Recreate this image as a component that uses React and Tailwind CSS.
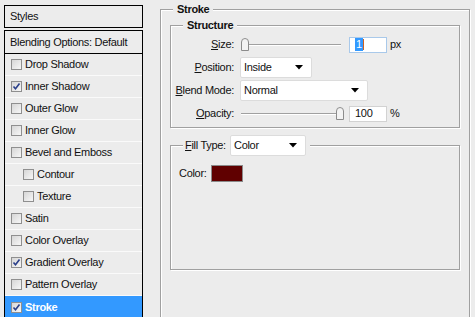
import React from "react";

const font = { fontFamily: '"Liberation Sans", Arial, sans-serif' };

function Check({ checked }) {
  return (
    <span className="w-[11px] h-[11px] shrink-0 border border-[#8f8f8f] bg-gradient-to-br from-[#d6d6d6] to-[#f7f7f7] flex items-center justify-center">
      {checked && (
        <svg width="9" height="9" viewBox="0 0 9 9">
          <path d="M1.5 4.5 L3.5 6.8 L7.5 1.5" fill="none" stroke="#2a3f8a" strokeWidth="1.6" />
        </svg>
      )}
    </span>
  );
}

function StyleRow({ label, checked, indent, active }) {
  return (
    <div
      className={
        "h-[22px] flex items-center gap-[3px] border-b border-[#fafafa] " +
        (indent ? "pl-[18px] " : "pl-[6px] ") +
        (active ? "bg-[#3399ff] text-white font-bold border-b-0" : "text-[#111]")
      }
    >
      <Check checked={checked} />
      <span>{label}</span>
    </div>
  );
}

function Arrow() {
  return (
    <svg width="8" height="5" viewBox="0 0 8 5" className="shrink-0">
      <path d="M0 0 H8 L4 4.5 Z" fill="#000" />
    </svg>
  );
}

function Select({ value, width }) {
  return (
    <div
      className="h-[21px] bg-white border border-[#dcdcdc] rounded-[2px] flex items-center justify-between pl-[3px] pr-[8px] text-[#111]"
      style={{ width }}
    >
      <span>{value}</span>
      <Arrow />
    </div>
  );
}

function Slider({ pos }) {
  return (
    <div className="relative w-[100px] h-[14px] flex items-center">
      <div className="w-full h-[2px] border-t border-[#a0a0a0] border-b border-b-white" />
      <svg
        width="8"
        height="13"
        viewBox="0 0 8 13"
        className="absolute top-0"
        style={{ left: pos }}
      >
        <path d="M0.5 12.5 V4 Q0.5 0.5 4 0.5 Q7.5 0.5 7.5 4 V12.5 Z" fill="#f3f3f3" stroke="#8c8c8c" />
      </svg>
    </div>
  );
}

function Key({ k, rest }) {
  return (
    <span>
      <span className="underline underline-offset-1">{k}</span>
      {rest}
    </span>
  );
}

export default function App() {
  const rows = [
    { label: "Drop Shadow" },
    { label: "Inner Shadow", checked: true },
    { label: "Outer Glow" },
    { label: "Inner Glow" },
    { label: "Bevel and Emboss" },
    { label: "Contour", indent: true },
    { label: "Texture", indent: true },
    { label: "Satin" },
    { label: "Color Overlay" },
    { label: "Gradient Overlay", checked: true },
    { label: "Pattern Overlay" },
    { label: "Stroke", checked: true, active: true },
  ];

  return (
    <div
      className="w-[475px] h-[317px] overflow-hidden bg-[#ececec] flex items-start pl-[4px] text-[11px] leading-[13px] tracking-[-0.3px]"
      style={font}
    >
      {/* styles list */}
      <div className="w-[139px] mt-[5px] flex flex-col">
        <div className="h-[23px] border border-black flex items-center pl-[5px] text-[#111]">Styles</div>
        <div className="mt-[2px] border border-black border-b-0">
          <div className="h-[23px] flex items-center pl-[5px] border-b border-black text-[#111]">
            Blending Options: Default
          </div>
          {rows.map((r) => (
            <StyleRow key={r.label} {...r} />
          ))}
        </div>
      </div>

      {/* stroke panel */}
      <fieldset className="ml-[17px] mt-[3px] w-[310px] h-[330px] border border-[#a0a0a0] shadow-[1px_1px_0_#fff,inset_1px_1px_0_#fff] px-[9px]">
        <legend className="ml-[3px] px-[4px] bg-[#ececec] font-bold text-[#111]">Stroke</legend>

        <fieldset className="mt-[3px] border border-[#a0a0a0] shadow-[1px_1px_0_#fff,inset_1px_1px_0_#fff] pt-[1px] pb-[2px]">
          <legend className="ml-[12px] px-[4px] bg-[#ececec] font-bold text-[#111]">Structure</legend>
          <div className="flex flex-col text-[#111]">
            <div className="h-[23px] flex items-center">
              <div className="w-[65px] text-right pr-[2px]">
                <Key k="S" rest="ize:" />
              </div>
              <div className="ml-[5px]">
                <Slider pos={0} />
              </div>
              <div className="ml-[8px] w-[38px] h-[16px] bg-white border border-[#a9c9ea] flex items-center pl-[5px]">
                <span className="bg-[#3399ff] text-white px-[1px]">1</span>
                <span className="w-[1px] h-[11px] bg-[#d06020]" />
              </div>
              <span className="ml-[3px]">px</span>
            </div>
            <div className="h-[23px] flex items-center">
              <div className="w-[65px] text-right pr-[2px]">
                <Key k="P" rest="osition:" />
              </div>
              <div className="ml-[4px]">
                <Select value="Inside" width={72} />
              </div>
            </div>
            <div className="h-[23px] flex items-center">
              <div className="w-[65px] text-right pr-[2px]">
                <Key k="B" rest="lend Mode:" />
              </div>
              <div className="ml-[4px]">
                <Select value="Normal" width={128} />
              </div>
            </div>
            <div className="h-[23px] flex items-center">
              <div className="w-[65px] text-right pr-[2px]">
                <Key k="O" rest="pacity:" />
              </div>
              <div className="ml-[5px]">
                <Slider pos={95} />
              </div>
              <div className="ml-[8px] w-[38px] h-[16px] bg-white border border-[#d2d2d2] flex items-center pl-[5px]">
                100
              </div>
              <span className="ml-[3px]">%</span>
            </div>
          </div>
        </fieldset>

        <fieldset className="mt-[7px] h-[135px] border border-[#a0a0a0] shadow-[1px_1px_0_#fff,inset_1px_1px_0_#fff] pl-[8px] pt-[9px]">
          <legend className="ml-[4px] pl-[2px] pr-[4px] bg-[#ececec] text-[#111]">
            <span className="inline-flex items-center">
              <span className="w-[41px]">
                <Key k="F" rest="ill Type:" />
              </span>
              <span className="ml-[4px]">
                <Select value="Color" width={76} />
              </span>
            </span>
          </legend>
          <div className="flex items-center gap-[4px] text-[#111]">
            <span>Color:</span>
            <span className="w-[32px] h-[17px] border border-[#8a8a8a] bg-[#600000]" />
          </div>
        </fieldset>
      </fieldset>
    </div>
  );
}
